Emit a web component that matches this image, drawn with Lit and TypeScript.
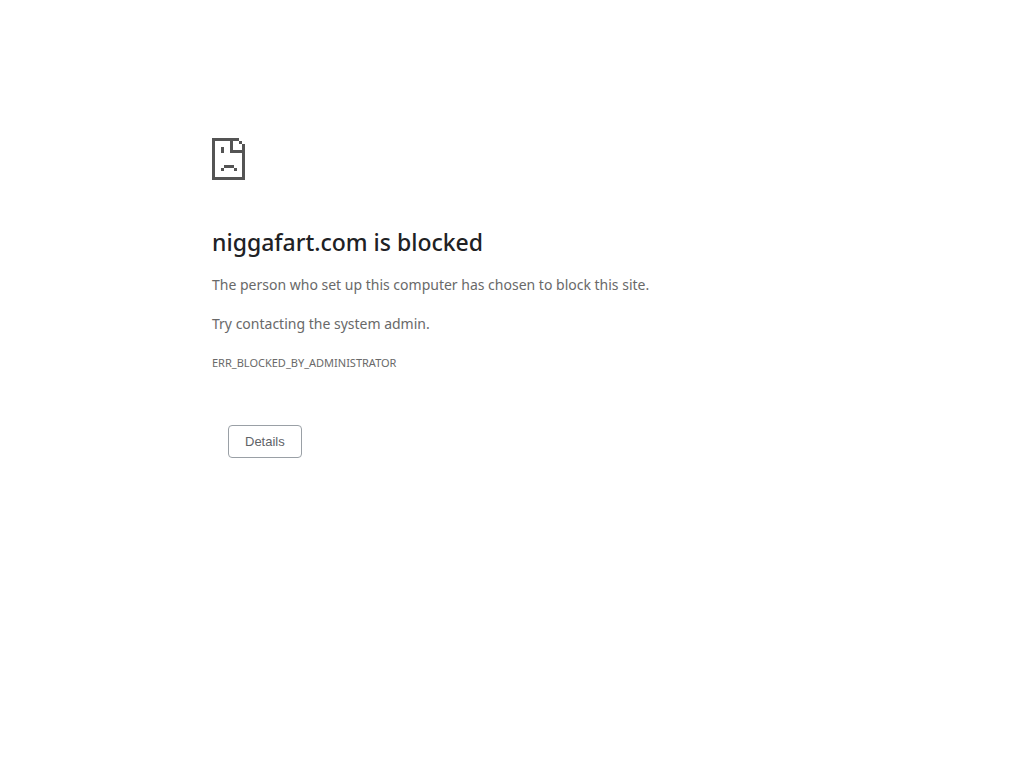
import { LitElement, html, css } from "lit";
import { customElement, state } from "lit/decorators.js";

@customElement("app-root")
export class AppRoot extends LitElement {
  @state() private open = false;

  static styles = css`
    :host {
      display: block;
      min-height: 100vh;
      background: #fff;
      color: #696969;
      font-family: "Noto Sans", "Open Sans", sans-serif;
      font-size: 14px;
      line-height: 24px;
    }
    main {
      box-sizing: border-box;
      max-width: 600px;
      margin: 0 auto;
      padding-top: 138px;
    }
    .icon {
      display: block;
      width: 33px;
      height: 42px;
      margin-bottom: 48px;
      fill: #545454;
    }
    h1 {
      margin: 0 0 16px;
      color: #202124;
      font-size: 23px;
      font-weight: 500;
      line-height: 29px;
    }
    p {
      margin: 0 0 15px;
    }
    .code {
      font-size: 11px;
    }
    button {
      margin: 35px 16px 0;
      padding: 8px 16px;
      border: 1px solid #9aa0a6;
      border-radius: 4px;
      background: #fff;
      color: #5f6368;
      font: 13px/15px "Liberation Sans", Arial, sans-serif;
      cursor: pointer;
    }
    .details {
      margin: 16px 0 0;
    }
  `;

  render() {
    return html`
      <main>
        <svg class="icon" viewBox="0 0 33 42" shape-rendering="crispEdges" aria-hidden="true">
          <path fill-rule="evenodd" d="M0 0H27V3H21V12H33V42H0ZM3 3V39H30V15H18V3Z" />
          <path d="M27 3h3v3h-3zM30 6h3v6h-3zM9 9h3v6h-3zM12 27h10v3h-10zM9 30h3v3h-3zM22 30h3v3h-3z" />
        </svg>
        <h1>niggafart.com is blocked</h1>
        <p>The person who set up this computer has chosen to block this site.</p>
        <p>Try contacting the system admin.</p>
        <p class="code">ERR_BLOCKED_BY_ADMINISTRATOR</p>
        <button type="button" aria-expanded=${this.open} @click=${() => (this.open = !this.open)}>Details</button>
        ${this.open ? html`<p class="details">Your system admin has blocked this site.</p>` : null}
      </main>
    `;
  }
}
